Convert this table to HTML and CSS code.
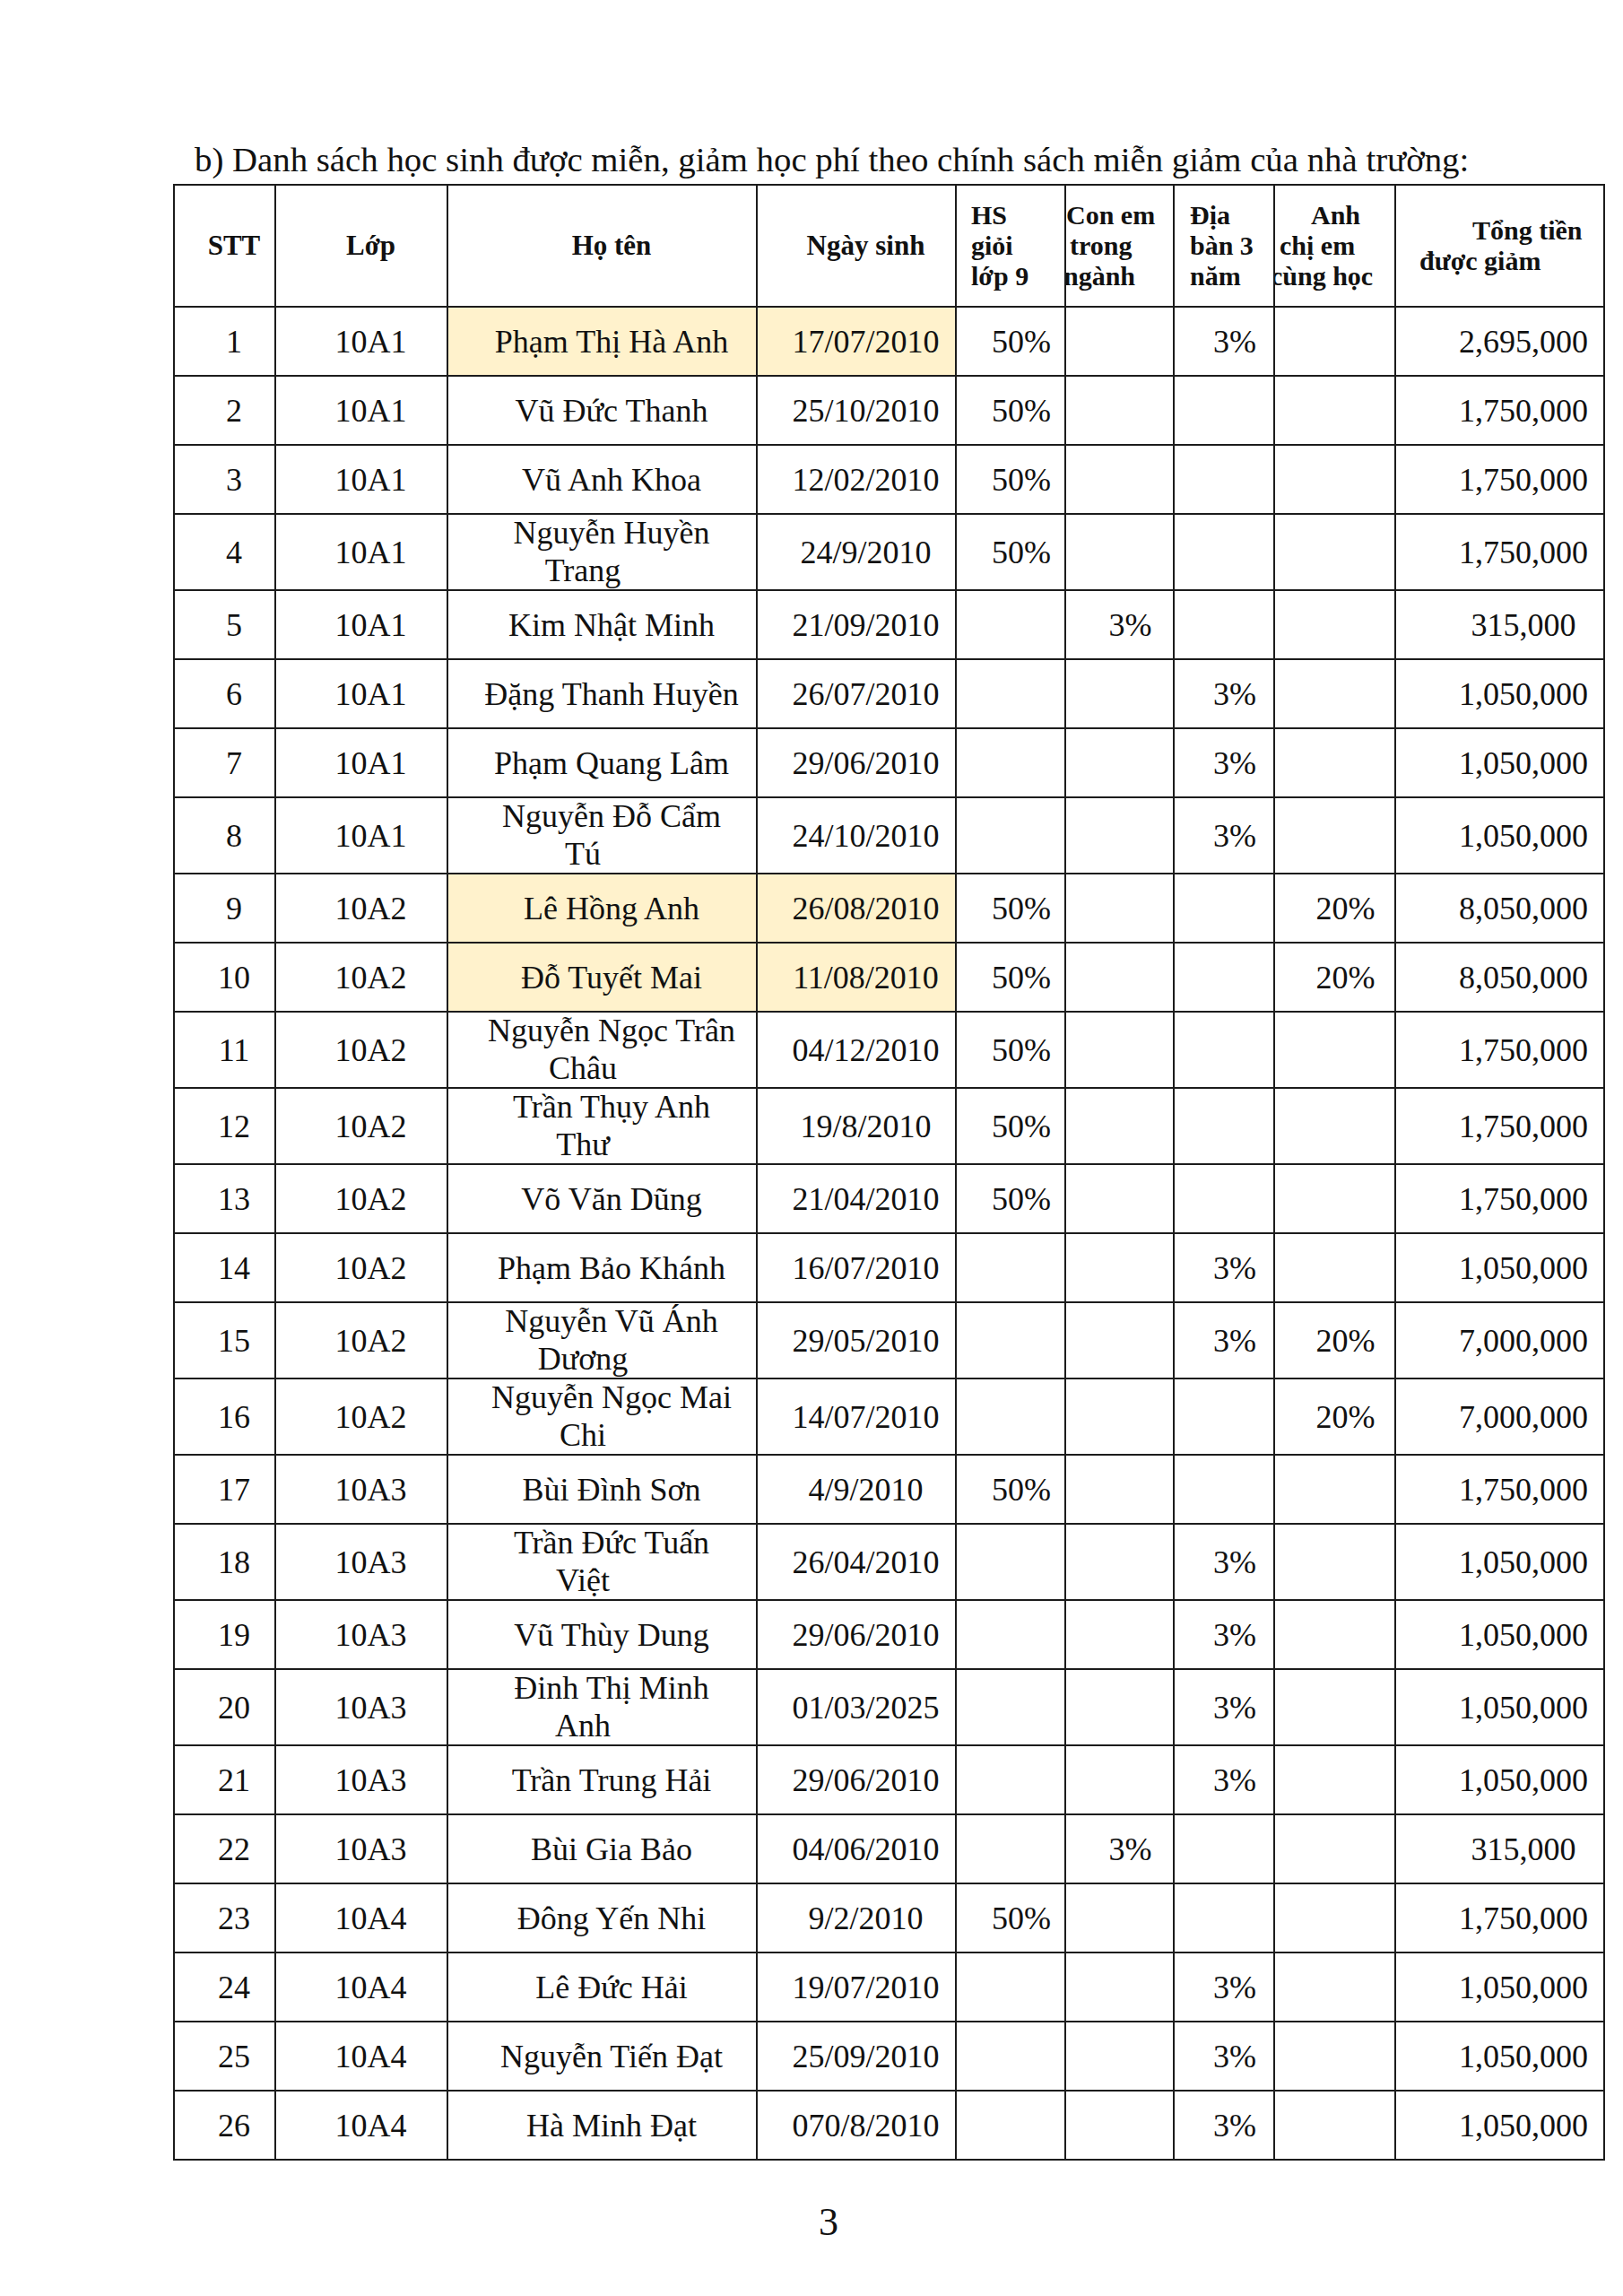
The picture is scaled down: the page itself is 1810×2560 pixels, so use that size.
FILE: index.html
```html
<!DOCTYPE html>
<html lang="vi">
<head>
<meta charset="utf-8">
<title>Danh sách miễn giảm học phí</title>
<link rel="stylesheet" href="styles.css">
</head>
<body>
<div class="page">
  <p class="title">b) Danh sách học sinh được miễn, giảm học phí theo chính sách miễn giảm của nhà trường:</p>
  <table class="list">
    <colgroup>
      <col class="c-stt"><col class="c-lop"><col class="c-ten"><col class="c-ns"><col class="c-hs"><col class="c-con"><col class="c-dia"><col class="c-anh"><col class="c-tong">
    </colgroup>
    <thead>
      <tr class="hrow">
        <th class="hc">STT</th>
        <th class="hc">Lớp</th>
        <th class="hc">Họ tên</th>
        <th class="hc">Ngày sinh</th>
        <th class="hl"><div class="hd"><span class="o16">HS</span><span class="o16">giỏi</span><span class="o16">lớp 9</span></div></th>
        <th class="hl"><div class="hd"><span class="o0">Con em</span><span class="o4">trong</span><span class="om3">ngành</span></div></th>
        <th class="hl"><div class="hd"><span class="o17">Địa</span><span class="o17">bàn 3</span><span class="o17">năm</span></div></th>
        <th class="hl"><div class="hd"><span class="o40">Anh</span><span class="o5">chị em</span><span class="om5">cùng học</span></div></th>
        <th class="hl"><div class="hd"><span class="o85">Tổng tiền</span><span class="o26">được giảm</span></div></th>
      </tr>
    </thead>
    <tbody>
      <tr class="r1"><td>1</td><td>10A1</td><td class="hi">Phạm Thị Hà Anh</td><td class="hi">17/07/2010</td><td class="pc">50%</td><td class="pc"></td><td class="pc">3%</td><td class="pc"></td><td class="tot">2,695,000</td></tr>
      <tr class="r1"><td>2</td><td>10A1</td><td>Vũ Đức Thanh</td><td>25/10/2010</td><td class="pc">50%</td><td class="pc"></td><td class="pc"></td><td class="pc"></td><td class="tot">1,750,000</td></tr>
      <tr class="r1"><td>3</td><td>10A1</td><td>Vũ Anh Khoa</td><td>12/02/2010</td><td class="pc">50%</td><td class="pc"></td><td class="pc"></td><td class="pc"></td><td class="tot">1,750,000</td></tr>
      <tr class="r2"><td>4</td><td>10A1</td><td class="nm2"><span class="l1">Nguyễn Huyền</span><span class="l2">Trang</span></td><td>24/9/2010</td><td class="pc">50%</td><td class="pc"></td><td class="pc"></td><td class="pc"></td><td class="tot">1,750,000</td></tr>
      <tr class="r1"><td>5</td><td>10A1</td><td>Kim Nhật Minh</td><td>21/09/2010</td><td class="pc"></td><td class="pc">3%</td><td class="pc"></td><td class="pc"></td><td class="tot">315,000</td></tr>
      <tr class="r1"><td>6</td><td>10A1</td><td>Đặng Thanh Huyền</td><td>26/07/2010</td><td class="pc"></td><td class="pc"></td><td class="pc">3%</td><td class="pc"></td><td class="tot">1,050,000</td></tr>
      <tr class="r1"><td>7</td><td>10A1</td><td>Phạm Quang Lâm</td><td>29/06/2010</td><td class="pc"></td><td class="pc"></td><td class="pc">3%</td><td class="pc"></td><td class="tot">1,050,000</td></tr>
      <tr class="r2"><td>8</td><td>10A1</td><td class="nm2"><span class="l1">Nguyễn Đỗ Cẩm</span><span class="l2">Tú</span></td><td>24/10/2010</td><td class="pc"></td><td class="pc"></td><td class="pc">3%</td><td class="pc"></td><td class="tot">1,050,000</td></tr>
      <tr class="r1"><td>9</td><td>10A2</td><td class="hi">Lê Hồng Anh</td><td class="hi">26/08/2010</td><td class="pc">50%</td><td class="pc"></td><td class="pc"></td><td class="pc">20%</td><td class="tot">8,050,000</td></tr>
      <tr class="r1"><td>10</td><td>10A2</td><td class="hi">Đỗ Tuyết Mai</td><td class="hi">11/08/2010</td><td class="pc">50%</td><td class="pc"></td><td class="pc"></td><td class="pc">20%</td><td class="tot">8,050,000</td></tr>
      <tr class="r2"><td>11</td><td>10A2</td><td class="nm2"><span class="l1">Nguyễn Ngọc Trân</span><span class="l2">Châu</span></td><td>04/12/2010</td><td class="pc">50%</td><td class="pc"></td><td class="pc"></td><td class="pc"></td><td class="tot">1,750,000</td></tr>
      <tr class="r2"><td>12</td><td>10A2</td><td class="nm2"><span class="l1">Trần Thụy Anh</span><span class="l2">Thư</span></td><td>19/8/2010</td><td class="pc">50%</td><td class="pc"></td><td class="pc"></td><td class="pc"></td><td class="tot">1,750,000</td></tr>
      <tr class="r1"><td>13</td><td>10A2</td><td>Võ Văn Dũng</td><td>21/04/2010</td><td class="pc">50%</td><td class="pc"></td><td class="pc"></td><td class="pc"></td><td class="tot">1,750,000</td></tr>
      <tr class="r1"><td>14</td><td>10A2</td><td>Phạm Bảo Khánh</td><td>16/07/2010</td><td class="pc"></td><td class="pc"></td><td class="pc">3%</td><td class="pc"></td><td class="tot">1,050,000</td></tr>
      <tr class="r2"><td>15</td><td>10A2</td><td class="nm2"><span class="l1">Nguyễn Vũ Ánh</span><span class="l2">Dương</span></td><td>29/05/2010</td><td class="pc"></td><td class="pc"></td><td class="pc">3%</td><td class="pc">20%</td><td class="tot">7,000,000</td></tr>
      <tr class="r2"><td>16</td><td>10A2</td><td class="nm2"><span class="l1">Nguyễn Ngọc Mai</span><span class="l2">Chi</span></td><td>14/07/2010</td><td class="pc"></td><td class="pc"></td><td class="pc"></td><td class="pc">20%</td><td class="tot">7,000,000</td></tr>
      <tr class="r1"><td>17</td><td>10A3</td><td>Bùi Đình Sơn</td><td>4/9/2010</td><td class="pc">50%</td><td class="pc"></td><td class="pc"></td><td class="pc"></td><td class="tot">1,750,000</td></tr>
      <tr class="r2"><td>18</td><td>10A3</td><td class="nm2"><span class="l1">Trần Đức Tuấn</span><span class="l2">Việt</span></td><td>26/04/2010</td><td class="pc"></td><td class="pc"></td><td class="pc">3%</td><td class="pc"></td><td class="tot">1,050,000</td></tr>
      <tr class="r1"><td>19</td><td>10A3</td><td>Vũ Thùy Dung</td><td>29/06/2010</td><td class="pc"></td><td class="pc"></td><td class="pc">3%</td><td class="pc"></td><td class="tot">1,050,000</td></tr>
      <tr class="r2"><td>20</td><td>10A3</td><td class="nm2"><span class="l1">Đinh Thị Minh</span><span class="l2">Anh</span></td><td>01/03/2025</td><td class="pc"></td><td class="pc"></td><td class="pc">3%</td><td class="pc"></td><td class="tot">1,050,000</td></tr>
      <tr class="r1"><td>21</td><td>10A3</td><td>Trần Trung Hải</td><td>29/06/2010</td><td class="pc"></td><td class="pc"></td><td class="pc">3%</td><td class="pc"></td><td class="tot">1,050,000</td></tr>
      <tr class="r1"><td>22</td><td>10A3</td><td>Bùi Gia Bảo</td><td>04/06/2010</td><td class="pc"></td><td class="pc">3%</td><td class="pc"></td><td class="pc"></td><td class="tot">315,000</td></tr>
      <tr class="r1"><td>23</td><td>10A4</td><td>Đông Yến Nhi</td><td>9/2/2010</td><td class="pc">50%</td><td class="pc"></td><td class="pc"></td><td class="pc"></td><td class="tot">1,750,000</td></tr>
      <tr class="r1"><td>24</td><td>10A4</td><td>Lê Đức Hải</td><td>19/07/2010</td><td class="pc"></td><td class="pc"></td><td class="pc">3%</td><td class="pc"></td><td class="tot">1,050,000</td></tr>
      <tr class="r1"><td>25</td><td>10A4</td><td>Nguyễn Tiến Đạt</td><td>25/09/2010</td><td class="pc"></td><td class="pc"></td><td class="pc">3%</td><td class="pc"></td><td class="tot">1,050,000</td></tr>
      <tr class="r1"><td>26</td><td>10A4</td><td>Hà Minh Đạt</td><td>070/8/2010</td><td class="pc"></td><td class="pc"></td><td class="pc">3%</td><td class="pc"></td><td class="tot">1,050,000</td></tr>
    </tbody>
  </table>
  <p class="pageno">3</p>
</div>
</body>
</html>
```

FILE: styles.css
```css
html, body {
  margin: 0;
  padding: 0;
  background: #ffffff;
}
body {
  font-family: "Liberation Serif", "Times New Roman", serif;
  color: #111111;
}
.page {
  width: 1810px;
  min-height: 2560px;
  padding-top: 157px;
  box-sizing: border-box;
}
.title {
  margin: 0 0 6px 0;
  padding-left: 217px;
  font-size: 38.8px;
  line-height: 42px;
  white-space: nowrap;
}
.list {
  margin-left: 193px;
  width: 1597px;
  table-layout: fixed;
  border-collapse: collapse;
  font-size: 36px;
}
.c-stt { width: 113px; }
.c-lop { width: 192px; }
.c-ten { width: 345px; }
.c-ns { width: 222px; }
.c-hs { width: 122px; }
.c-con { width: 121px; }
.c-dia { width: 112px; }
.c-anh { width: 135px; }
.c-tong { width: 233px; }

.list th, .list td {
  border: 2px solid #1c1c1c;
  vertical-align: middle;
  padding: 0;
}
.hrow { height: 136px; }
.list th {
  font-weight: bold;
  font-size: 30px;
  line-height: 34px;
}
.list th.hc {
  text-align: center;
  padding-left: 21px;
  font-size: 31px;
}
.hl {
  text-align: left;
}
.hd {
  overflow: hidden;
  white-space: nowrap;
}
.hd span { display: block; }
.o0 { margin-left: 0; }
.o4 { margin-left: 4px; }
.om3 { margin-left: -3px; }
.o5 { margin-left: 5px; }
.om5 { margin-left: -5px; }
.o16 { margin-left: 16px; }
.o17 { margin-left: 17px; }
.o26 { margin-left: 26px; }
.o40 { margin-left: 40px; }
.o85 { margin-left: 85px; }

.r1 { height: 77px; }
.r2 { height: 85px; }
.list td {
  text-align: center;
  padding-left: 21px;
  line-height: 40px;
  white-space: nowrap;
}
.list td.pc { padding-left: 24px; }
.list td.tot { padding-left: 53px; }
.list td.hi { background: #fff2cc; }
.list td.nm2 {
  padding-left: 0;
  line-height: 41.5px;
}
.l1, .l2 { display: block; }
.l1 { padding-left: 21px; }
.l2 { padding-right: 43px; }

.pageno {
  margin: 44px 0 0 0;
  padding-left: 38px;
  text-align: center;
  font-size: 44px;
  line-height: 50px;
}
```
